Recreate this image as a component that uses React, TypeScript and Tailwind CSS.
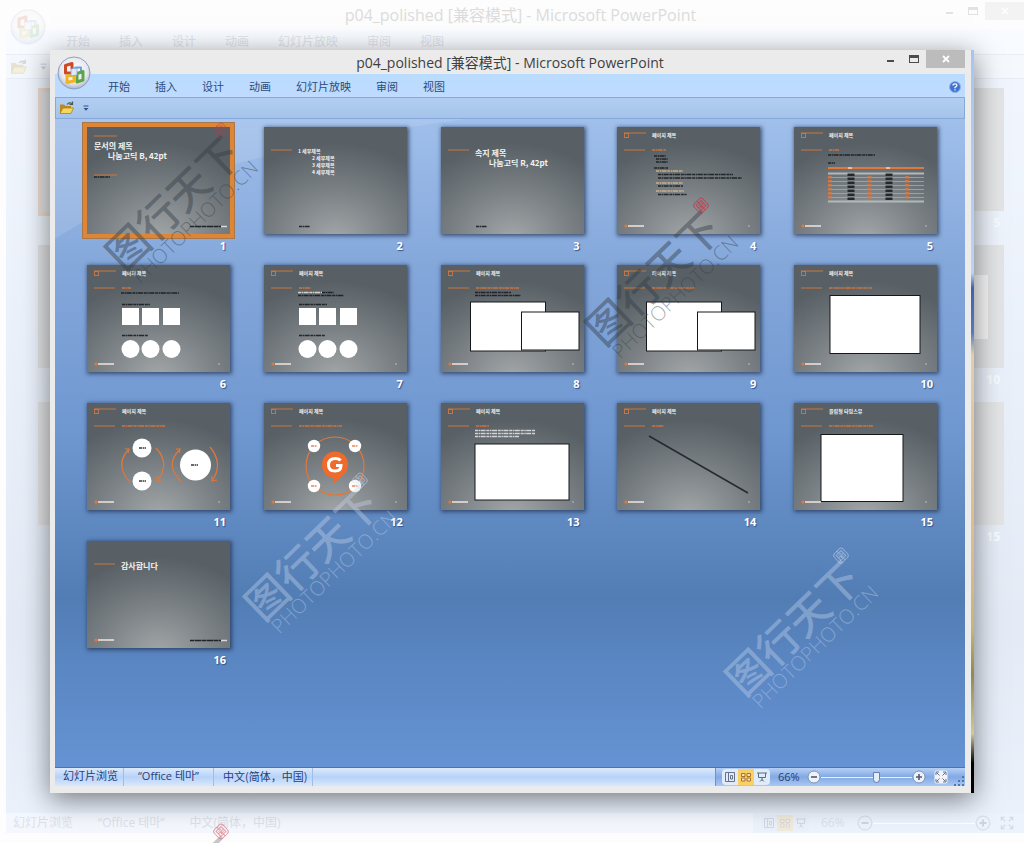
import React from "react";

const MENU = ["开始", "插入", "设计", "动画", "幻灯片放映", "审阅", "视图"];
const TITLE = "p04_polished [兼容模式] - Microsoft PowerPoint";
const ORANGE = "#e0783a";

function OfficeLogo({ className }: { className: string }) {
  return (
    <svg viewBox="0 0 34 34" className={className} aria-hidden="true">
      <defs>
        <radialGradient id="orb" cx="50%" cy="40%" r="60%">
          <stop offset="0" stopColor="#ffffff" />
          <stop offset="0.7" stopColor="#e6e8ee" />
          <stop offset="1" stopColor="#a9b4c8" />
        </radialGradient>
      </defs>
      <circle cx="17" cy="17" r="16" fill="url(#orb)" stroke="#8f9fc0" />
      <g fill="none" strokeWidth="3" strokeLinejoin="round">
        <path d="M14 17H8.500V9.500L15 7.500V13" stroke="#cf4a24" />
        <path d="M17 12.500L18.500 11.500H24V18" stroke="#6f9fe0" strokeWidth="2" />
        <path d="M20 17.500L26 15.500V24L20 26Z" stroke="#5fa548" />
        <path d="M10 20V26.500L17 25V19Z" stroke="#f0b323" />
      </g>
      <path d="M14 13L20 12V19L14 20Z" fill="#dfe9f8" stroke="#7da3dc" strokeWidth="0.800" />
    </svg>
  );
}

function FolderIcon({ className }: { className: string }) {
  return (
    <svg viewBox="0 0 16 14" className={className} aria-hidden="true">
      <path d="M1 3.500H5L6.500 5H12V12.500H1Z" fill="#b98a24" />
      <path d="M1 12.500L4 7H14.500L12 12.500Z" fill="#f7d660" stroke="#a97d1c" strokeWidth="0.700" />
      <path d="M8 3.500Q10 1 13 2.500M13.500 0.500V3.500H10.500" fill="none" stroke="#4c5a4a" strokeWidth="1.200" />
    </svg>
  );
}

function MoreIcon({ className }: { className: string }) {
  return (
    <svg viewBox="0 0 6 6" className={className} aria-hidden="true">
      <path d="M0.500 1H5.500" stroke="#33508a" />
      <path d="M0.500 3H5.500L3 5.800Z" fill="#33508a" />
    </svg>
  );
}

// A line of body copy, too small to be read at thumbnail size
function Copy({ x, y, w, color = "#15181b" }: { x: number; y: number; w: number; color?: string }) {
  return (
    <path
      d={`M${x} ${y}h${w}`}
      stroke={color}
      strokeWidth="1.500"
      strokeDasharray="3 0.600 1.500 0.500 5 0.800"
      opacity="0.850"
    />
  );
}

function Rule({ y, x = 7, to = 28 }: { y: number; x?: number; to?: number }) {
  return <path d={`M${x} ${y}H${to}`} stroke={ORANGE} strokeWidth="1" opacity="0.850" />;
}

function Label({ x, y, size, children }: { x: number; y: number; size: number; children: string }) {
  return (
    <text x={x} y={y} fontSize={size} fontWeight="600" fill="#f2f3f3" className="font-['Noto_Sans_CJK_KR',sans-serif]">
      {children}
    </text>
  );
}

function Brand() {
  return (
    <g>
      <circle cx="9" cy="99" r="1.600" fill={ORANGE} />
      <path d="M11 99H27" stroke="#f0e6df" strokeWidth="1.500" />
    </g>
  );
}

function Page({ title = "페이지 제목", sub = 43, children }: { title?: string; sub?: number; children?: React.ReactNode }) {
  return (
    <g>
      <Rule y={6} x={7} to={29} />
      <rect x="7.500" y="6.500" width="4" height="4" fill="none" stroke={ORANGE} opacity="0.800" />
      <Label x={35} y={10} size={5}>
        {title}
      </Label>
      <Rule y={23} />
      <Copy x={35} y={23} w={sub} color={ORANGE} />
      {children}
      <Brand />
      <path d="M131 99h2" stroke="#b9bcbe" />
    </g>
  );
}

function Shapes() {
  return (
    <g>
      <Copy x={35} y={39.5} w={28} />
      <Copy x={35} y={70.5} w={26} />
      {[35, 55, 76].map((x) => (
        <g key={x} fill="#fff">
          <rect x={x} y="43" width="17" height="17" />
          <circle cx={x + 8.5} cy="84" r="9" />
        </g>
      ))}
    </g>
  );
}

function Frames() {
  return (
    <g fill="#fff" stroke="#15181b">
      <rect x="29.500" y="37" width="75" height="49" />
      <rect x="80.500" y="47" width="57.500" height="38" />
    </g>
  );
}

function Footnote() {
  return (
    <g>
      <path d="M103 99.500H134" stroke="#202326" strokeWidth="1.500" strokeDasharray="4 0.500 7 0.500" />
      <path d="M134 99.500H140" stroke="#d9dadb" strokeWidth="1.500" />
    </g>
  );
}

const SLIDES: React.ReactNode[] = [
  <>
    <Rule y={9} to={30} />
    <Label x={7} y={22} size={8}>
      문서의 제목
    </Label>
    <Label x={21} y={32} size={8}>
      나눔고딕 B, 42pt
    </Label>
    <Rule y={48} to={30} />
    <Copy x={7} y={50} w={16} />
    <Footnote />
  </>,
  <>
    <Rule y={23} />
    <Label x={34} y={26} size={5}>
      1  세부제목
    </Label>
    <Label x={48} y={33} size={5}>
      2  세부제목
    </Label>
    <Label x={48} y={40} size={5}>
      3  세부제목
    </Label>
    <Label x={48} y={47} size={5}>
      4  세부제목
    </Label>
    <Copy x={35} y={99.5} w={11} />
  </>,
  <>
    <Rule y={23} />
    <Label x={34} y={29} size={8}>
      속지 제목
    </Label>
    <Label x={48} y={39} size={8}>
      나눔고딕 R, 42pt
    </Label>
    <Copy x={35} y={99.5} w={11} />
  </>,
  <Page sub={14}>
    <Copy x={37} y={29} w={12} />
    <Copy x={39} y={32} w={12} />
    <Copy x={39} y={35} w={12} />
    <Copy x={37} y={41} w={14} />
    <Copy x={39} y={44} w={27} color="#d8b98c" />
    <Copy x={41} y={47.5} w={75} />
    <Copy x={41} y={51} w={84} />
    <Copy x={39} y={56} w={27} color="#d8b98c" />
    <Copy x={41} y={59} w={25} />
    <Copy x={39} y={64} w={28} color="#d8b98c" />
    <Copy x={41} y={67.5} w={29} />
  </Page>,
  <Page sub={10}>
    <Copy x={34} y={28} w={47} />
    <Copy x={34} y={36} w={7} />
    <path d="M34 41H130" stroke={ORANGE} strokeWidth="2" />
    <path d="M34 46.500H130M34 74.500H130" stroke="#b4b7b9" strokeWidth="1.800" />
    {[50.5, 54.5, 58.5, 62.5, 66.5, 70.5].map((y) => (
      <path key={y} d={`M34 ${y}H130`} stroke="#a7abad" strokeWidth="0.800" />
    ))}
    <path d="M57 46.500V73M95 46.500V73" stroke="#24282b" strokeWidth="7" strokeDasharray="2.600 1.400" />
    <path d="M36 49V73M75.500 49V73M113 49V73" stroke={ORANGE} strokeWidth="4" strokeDasharray="2.600 1.400" opacity="0.800" />
    <path d="M54 41h4M92 41h4" stroke="#fff" />
  </Page>,
  <Page sub={9}>
    <Copy x={34} y={28} w={58} />
    <Shapes />
  </Page>,
  <Page sub={12}>
    <Copy x={34} y={27.5} w={24} color="#ece3dc" />
    <Copy x={58} y={27.5} w={12} />
    <Copy x={34} y={30.5} w={46} />
    <Shapes />
  </Page>,
  <Page>
    <Copy x={34} y={27.5} w={36} />
    <Copy x={34} y={30.5} w={46} />
    <Frames />
  </Page>,
  <Page>
    <Frames />
  </Page>,
  <Page>
    <rect x="36" y="30.500" width="90" height="58" fill="#fff" stroke="#15181b" />
  </Page>,
  <Page>
    <g fill="none" stroke={ORANGE} strokeWidth="1.200">
      <path d="M42 46Q27 62 43 79M69 45Q84 61 70 78M93 46Q77 62 94 78M123 44Q137 61 125 78" />
      <path d="M38 46L42 46L41 50M75 77L70 78L70 73M89 46L93 46L92 50M130 77L125 78L125 73" />
    </g>
    <g fill="#fff">
      <circle cx="55" cy="45" r="9.500" />
      <circle cx="55" cy="78" r="9.500" />
      <circle cx="108.500" cy="62" r="15.500" />
    </g>
    <Copy x={52} y={45} w={7} />
    <Copy x={52} y={78} w={7} />
    <Copy x={104} y={62} w={7} />
  </Page>,
  <Page>
    <circle cx="71" cy="63" r="29" fill="none" stroke={ORANGE} strokeWidth="1.200" />
    {[50, 91].map((x) =>
      [43, 83].map((y) => (
        <g key={`${x}-${y}`}>
          <circle cx={x} cy={y} r="6.200" fill="#fff" />
          <Copy x={x - 3} y={y} w={6} color={ORANGE} />
        </g>
      )),
    )}
    <path d="M71 48.500A13 13 0 0 1 84 61.500C84 71 77 73 70 80.500L69.500 75C62 74 58 68 58 61.500A13 13 0 0 1 71 48.500Z" fill="#ee6b2b" />
    <path d="M76.500 57.500Q75 55.500 71.500 55.500Q64.500 55.500 64.500 62Q64.500 68 71 68Q77 68 77 62.500H72" fill="none" stroke="#fff" strokeWidth="3" />
  </Page>,
  <Page sub={13}>
    <Copy x={34} y={27.5} w={60} color="#e6e7e8" />
    <Copy x={34} y={30.5} w={60} color="#e6e7e8" />
    <Copy x={34} y={33.5} w={44} color="#e6e7e8" />
    <rect x="34" y="41" width="94" height="56" fill="#fff" stroke="#15181b" />
  </Page>,
  <Page sub={12}>
    <path d="M32 33L131 90" stroke="#262a33" strokeWidth="1.500" />
  </Page>,
  <Page title="플립형 타임스뷰" sub={44}>
    <rect x="27" y="31.500" width="82" height="67" fill="#fff" stroke="#15181b" />
  </Page>,
  <>
    <Rule y={23} />
    <Label x={34} y={28} size={8}>
      감사합니다
    </Label>
    <Brand />
    <Footnote />
  </>,
];

function Slide({ number, selected, children }: { number: number; selected: boolean; children: React.ReactNode }) {
  return (
    <figure className="flex flex-col">
      <svg
        viewBox="0 0 143 107"
        role="img"
        aria-label={`${number}`}
        className={
          selected
            ? "h-[107px] w-full bg-[radial-gradient(ellipse_80%_90%_at_50%_105%,#a3a7a9_0%,#7b8185_50%,#586065_100%)] outline-4 outline-[#df8636] ring-5 ring-[#a8774b]"
            : "h-[107px] w-full bg-[radial-gradient(ellipse_80%_90%_at_50%_105%,#a3a7a9_0%,#7b8185_50%,#586065_100%)] shadow-[1px_1px_4px_1px_rgba(30,45,75,0.7)]"
        }
      >
        {children}
      </svg>
      <figcaption className="mt-1 h-4 pr-1 text-right font-['Noto_Sans',sans-serif] text-[11px] leading-4 font-bold text-white [text-shadow:1px_1px_1px_#34558c]">
        {number}
      </figcaption>
    </figure>
  );
}

function WindowButtons() {
  return (
    <div className="flex items-start">
      <button aria-label="最小化" className="flex h-[18px] w-6 items-center justify-center">
        <span className="mt-1 h-0.5 w-[7px] bg-[#4c4c4c]" />
      </button>
      <button aria-label="最大化" className="flex h-[18px] w-6 items-center justify-center">
        <span className="h-2 w-[10px] border border-t-3 border-[#4c4c4c]" />
      </button>
      <button aria-label="关闭" className="flex h-[18px] w-[39px] items-center justify-center bg-[#bcbcbc]">
        <svg viewBox="0 0 8 8" className="size-2">
          <path d="M1 1L7 7M7 1L1 7" stroke="#fff" strokeWidth="1.800" />
        </svg>
      </button>
    </div>
  );
}

function ViewButtons() {
  return (
    <div className="flex rounded-sm bg-[#dfebfa]">
      <button aria-label="普通视图" className="flex h-4 w-4 items-center justify-center">
        <svg viewBox="0 0 10 10" className="size-[10px]" fill="none" stroke="#66728a">
          <path d="M0.500 0.500H9.500V9.500H0.500ZM3.500 0.500V9.500M5.500 3.500H7.500V7H5.500Z" />
        </svg>
      </button>
      <button aria-label="幻灯片浏览" className="flex h-4 w-4 items-center justify-center bg-[#fbcf62]">
        <svg viewBox="0 0 10 10" className="size-[10px]" fill="#fbe6b2" stroke="#a5712c">
          <path d="M0.500 1.500H4V4.500H0.500ZM6 1.500H9.500V4.500H6ZM0.500 6H4V9H0.500ZM6 6H9.500V9H6Z" />
        </svg>
      </button>
      <button aria-label="放映" className="flex h-4 w-4 items-center justify-center">
        <svg viewBox="0 0 10 10" className="size-[10px]" fill="none" stroke="#5d6f7d">
          <path d="M0 1H10M1.500 1V5.500H8.500V1M5 5.500V9M3 9.500L5 7.500L7 9.500" />
        </svg>
      </button>
    </div>
  );
}

function RoundIcon({ plus, className }: { plus?: boolean; className: string }) {
  return (
    <svg viewBox="0 0 14 14" className={className} aria-hidden="true">
      <circle cx="7" cy="7" r="6" fill="#edf2f9" stroke="#7d93b8" />
      <path d={plus ? "M4 7H10M7 4V10" : "M4 7H10"} stroke="#4c5b75" strokeWidth="1.600" />
    </svg>
  );
}

function FitIcon({ className }: { className: string }) {
  return (
    <svg viewBox="0 0 14 14" className={className} aria-hidden="true">
      <rect x="0.500" y="0.500" width="13" height="13" rx="2" fill="#f0f4fa" />
      <path
        d="M2 5V2H5M9 2H12V5M12 9V12H9M5 12H2V9M2.500 2.500L5.500 5.500M11.500 2.500L8.500 5.500M2.500 11.500L5.500 8.500M11.500 11.500L8.500 8.500"
        fill="none"
        stroke="#66748c"
      />
    </svg>
  );
}

function StatusBar() {
  return (
    <footer className="flex h-[19px] items-stretch border-t border-[#4f74ad] bg-linear-to-b from-[#dceafd] via-[#b7d2f8] to-[#d8e8fd] text-[11px] leading-4 text-[#24407a]">
      <span className="w-[69px] border-r border-[#a3bde2] pl-2">幻灯片浏览</span>
      <span className="w-[90px] border-r border-[#a3bde2] text-center">“Office 테마”</span>
      <span className="w-[99px] border-r border-[#a3bde2] pl-[9px] font-['Noto_Sans_CJK_SC',sans-serif]">中文(简体，中国)</span>
      <div className="ml-auto flex w-[250px] items-center border-l border-[#6f92c8] bg-linear-to-b from-[#b5d0f6] via-[#82a9e2] to-[#a9c9f5] pl-[6px]">
        <ViewButtons />
        <span className="ml-2 w-[29px]">66%</span>
        <button aria-label="缩小">
          <RoundIcon className="size-[14px]" />
        </button>
        <input
          type="range"
          aria-label="显示比例"
          min="0"
          max="100"
          defaultValue="62"
          className="h-3 w-[91px] appearance-none bg-[linear-gradient(#e8f0fb,#e8f0fb)] bg-[length:100%_1px] bg-center bg-no-repeat [&::-webkit-slider-thumb]:h-[11px] [&::-webkit-slider-thumb]:w-[7px] [&::-webkit-slider-thumb]:appearance-none [&::-webkit-slider-thumb]:rounded-b-full [&::-webkit-slider-thumb]:border [&::-webkit-slider-thumb]:border-[#6580ac] [&::-webkit-slider-thumb]:bg-[#e4ecf7]"
        />
        <button aria-label="放大">
          <RoundIcon plus className="size-[14px]" />
        </button>
        <button aria-label="适应窗口" className="ml-2">
          <FitIcon className="size-[14px]" />
        </button>
        <svg viewBox="0 0 10 10" className="mt-2 mr-px ml-auto size-[10px]" fill="#5576ad" aria-hidden="true">
          <path d="M8 0h2v2h-2ZM8 4h2v2h-2ZM4 4h2v2h-2ZM8 8h2v2h-2ZM4 8h2v2h-2ZM0 8h2v2h-2Z" />
        </svg>
      </div>
    </footer>
  );
}

function Backdrop() {
  return (
    <div aria-hidden="true" className="absolute inset-0 flex flex-col overflow-hidden bg-[#fdfdfd] pl-[6px]">
      <div className="flex h-[30px] shrink-0 items-center text-[16px] text-[#dcdcdc]">
        <span className="flex-1 pl-[11px] text-center">{TITLE}</span>
      </div>
      <div className="flex h-6 shrink-0 items-center gap-[29px] bg-[#f8fbff] pl-[60px] text-[12px] text-[#dfe3ec]">
        {MENU.map((item) => (
          <span key={item}>{item}</span>
        ))}
      </div>
      <div className="flex h-[25px] shrink-0 items-center gap-3 border-y border-[#e6edf7] bg-[#f5f9fe] pl-1">
        <FolderIcon className="h-4 w-[18px] opacity-20" />
        <MoreIcon className="size-[7px] opacity-20" />
      </div>
      <div className="flex grow flex-col gap-[10px] bg-linear-to-b from-[#f1f6fe] via-[#e4ebf6] via-75% to-[#eaf1fb] px-5 pt-[9px] pl-8">
        {[5, 10, 15].map((n) => (
          <div key={n} className="flex justify-between">
            <div className={n === 5 ? "h-32 w-40 border-4 border-[#eadcd2] bg-[#e2e3e4]" : "h-[123px] w-40 bg-[#e2e3e5]"} />
            <div className="w-40">
              <div className="flex h-[123px] items-center bg-[#e2e4e6] px-4">
                {n === 10 && <div className="h-16 w-full bg-[#f8f8f8]" />}
              </div>
              <div className="h-6 pr-1 text-right text-[12px] leading-6 font-bold text-[#f9fbfe]">{n}</div>
            </div>
          </div>
        ))}
      </div>
      <div className="mb-[10px] flex h-5 shrink-0 items-center gap-[25px] bg-[#f4f8fe] pl-[7px] text-[12px] text-[#dde0e9]">
        <span>幻灯片浏览</span>
        <span>“Office 테마”</span>
        <span>中文(简体，中国)</span>
        <div className="ml-auto flex h-full w-[271px] items-center bg-[#edf3fc] pl-2">
          <div className="flex items-center opacity-20">
            <ViewButtons />
          </div>
          <span className="ml-3 w-9">66%</span>
          <RoundIcon className="size-4 opacity-20" />
          <div className="h-px w-[102px] bg-white" />
          <RoundIcon plus className="size-4 opacity-20" />
          <FitIcon className="ml-2 size-4 opacity-20" />
        </div>
      </div>
      <div className="absolute top-[9px] left-[10px] opacity-15">
        <OfficeLogo className="size-9" />
      </div>
      <div className="absolute top-[2px] right-0 opacity-15">
        <WindowButtons />
      </div>
    </div>
  );
}

function Watermark({ className, seal }: { className: string; seal: string }) {
  return (
    <div className={`pointer-events-none absolute w-[170px] -rotate-44 whitespace-nowrap select-none ${className}`}>
      <div className="font-['Noto_Sans_CJK_SC',sans-serif] text-[42px] leading-[40px] font-medium">图行天下</div>
      <div className="pl-1 font-['Open_Sans',sans-serif] text-[20px] leading-[22px] font-light">PHOTOPHOTO.CN</div>
      <svg viewBox="0 0 14 14" className={`absolute -top-1 left-[162px] size-[14px] ${seal}`} fill="none" stroke="currentColor">
        <rect x="1" y="1" width="12" height="12" rx="3" />
        <path d="M3.500 3.500H10.500V10.500H3.500ZM3.500 7H10.500M7 1V13M5 5.200H9M5 8.800H9" />
      </svg>
    </div>
  );
}

export default function App() {
  return (
    <div className="relative flex min-h-screen flex-col overflow-hidden p-[50px] font-['Open_Sans','Noto_Sans_CJK_SC',sans-serif]">
      <Backdrop />
      <div className="relative flex grow shadow-[0_6px_26px_rgba(0,0,0,0.5)]">
        <div className="flex min-w-0 grow flex-col bg-[#ebebeb] pr-[6px] pb-[7px] pl-[5px]">
          <header className="grid h-6 shrink-0 grid-cols-[1fr_auto_1fr]">
            <span />
            <h1 className="text-[14px] leading-[25px] text-[#3f3f3f]">{TITLE}</h1>
            <div className="flex justify-end">
              <WindowButtons />
            </div>
          </header>
          <nav className="flex h-[23px] shrink-0 items-center gap-[25px] bg-linear-to-b from-[#b9dcfe] to-[#bfdbff] pt-[3px] pr-1 pl-[53px] text-[11px] text-[#2c4a80]">
            {MENU.map((item) => (
              <button key={item}>{item}</button>
            ))}
            <button aria-label="帮助" className="ml-auto">
              <svg viewBox="0 0 12 12" className="size-3">
                <circle cx="6" cy="6" r="5.500" fill="#3f73cf" stroke="#8fb3ea" />
                <path d="M4 4.500Q4 2.800 6 2.800Q8 2.800 8 4.300Q8 5.300 6 6.300V7.300M6 8.300V9.500" fill="none" stroke="#fff" strokeWidth="1.300" />
              </svg>
            </button>
          </nav>
          <div className="flex h-[22px] shrink-0 items-center gap-2 border border-[#84a8d9] bg-linear-to-b from-[#b2cff3] to-[#a5c2e9] pl-[3px]">
            <button aria-label="打开">
              <FolderIcon className="h-[14px] w-4" />
            </button>
            <button aria-label="更多">
              <MoreIcon className="size-[6px]" />
            </button>
          </div>
          <main className="relative grow bg-[linear-gradient(#a0bfeb_0%,#85a8db_22%,#6f97d0_48%,#527db4_74%,#5a86c2_84%,#6593d3_100%)] pt-2 pr-7 pb-4 pl-8">
            <svg viewBox="0 0 410 120" className="absolute top-0 left-0 h-[120px] w-[410px]" aria-hidden="true">
              <path d="M0 120Q120 40 410 0H0Z" fill="#fff" opacity="0.120" />
            </svg>
            <div className="relative grid grid-cols-[repeat(5,143px)] justify-between gap-y-[11px]">
              {SLIDES.map((slide, i) => (
                <Slide key={i} number={i + 1} selected={i === 0}>
                  {slide}
                </Slide>
              ))}
            </div>
          </main>
          <StatusBar />
        </div>
        <div className="w-[3px] bg-[linear-gradient(#a9c4ee_0%,#bcd2f4_30%,#3f63ad_32%,#5478bd_38%,#e0cfae_41%,#d9b98a_70%,#c9b56f_78%,#8f8a52_84%,#d0c79a_92%,#000_96%)]" />
      </div>
      <div className="absolute top-14 left-[57px]">
        <OfficeLogo className="size-[34px]" />
      </div>
      <Watermark className="top-[178px] left-[95px] text-[#343d47]/45" seal="text-[#a8434c]/50" />
      <Watermark className="top-[253px] left-[575px] text-[#343d47]/45" seal="text-[#c23f4c]/80" />
      <Watermark className="top-[528px] left-[234px] text-[#c9d8ee]/40" seal="text-[#c9d8ee]/50" />
      <Watermark className="top-[603px] left-[715px] text-[#c9d8ee]/40" seal="text-[#c9d8ee]/50" />
      <Watermark className="top-[879px] left-[95px] text-[#343d47]/30" seal="text-[#e0626b]/60" />
    </div>
  );
}
